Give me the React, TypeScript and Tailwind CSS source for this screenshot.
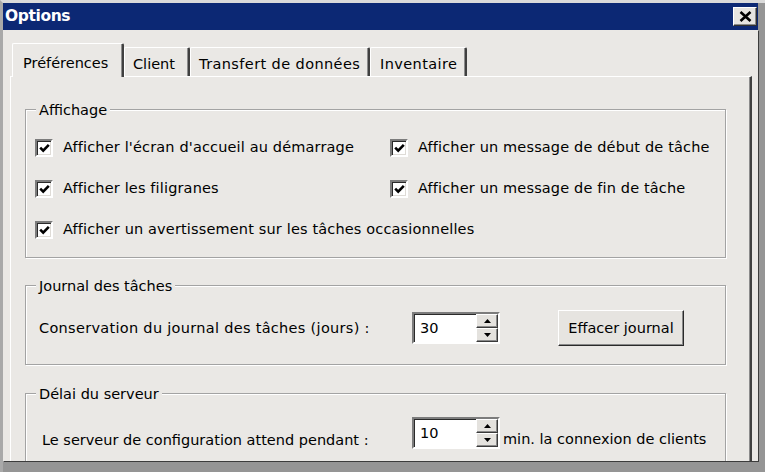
import React from "react";

function Check() {
  return (
    <span className="w-[18px] h-[18px] shrink-0 bg-white border-t-2 border-l-2 border-t-[#7c7c7c] border-l-[#7c7c7c] border-b-2 border-r-2 border-b-white border-r-white shadow-[inset_1px_1px_0_#2a2a2a,inset_-1px_-1px_0_#dedbd6] flex items-center justify-center">
      <svg width="11" height="10" viewBox="0 0 11 10">
        <path d="M1.2 4.6 L4.2 7.6 L9.8 1.8" stroke="#000" strokeWidth="2.6" fill="none" />
      </svg>
    </span>
  );
}

function CheckRow({ label, className = "" }: { label: string; className?: string }) {
  return (
    <div className={"h-[41px] flex items-center " + className}>
      <Check />
      <span className="ml-[10px] whitespace-nowrap tracking-[0.15px]">{label}</span>
    </div>
  );
}

function SpinBtn({ up }: { up?: boolean }) {
  return (
    <div className="flex-1 bg-[#e4e2de] border-t border-l border-t-white border-l-white border-b border-r border-b-[#3a3a3a] border-r-[#3a3a3a] shadow-[inset_-1px_-1px_0_#8a8a8a] flex items-center justify-center">
      <svg width="7" height="4" viewBox="0 0 7 4">
        {up ? <path d="M0 4 L3.5 0 L7 4Z" fill="#000" /> : <path d="M0 0 L3.5 4 L7 0Z" fill="#000" />}
      </svg>
    </div>
  );
}

function Spin({ value }: { value: string }) {
  return (
    <div className="w-[88px] h-[32px] shrink-0 flex bg-white border-t-2 border-l-2 border-t-[#7c7c7c] border-l-[#7c7c7c] border-b-2 border-r-2 border-b-white border-r-white shadow-[inset_1px_1px_0_#2a2a2a]">
      <div className="flex-1 pl-[6px] flex items-center">{value}</div>
      <div className="w-[22px] flex flex-col">
        <SpinBtn up />
        <SpinBtn />
      </div>
    </div>
  );
}

function Group({ title, className = "", children }: { title: string; className?: string; children: React.ReactNode }) {
  return (
    <div className={"relative w-[701px] border border-[#a3a3a3] shadow-[inset_1px_1px_0_#ffffff,1px_1px_0_#ffffff] " + className}>
      <span className="absolute left-[10px] -top-[8px] px-[3px] bg-[#eae8e5] leading-[17px] whitespace-nowrap">{title}</span>
      {children}
    </div>
  );
}

function Tab({ label, selected, w, pl, tr = "" }: { label: string; selected?: boolean; w: string; pl: string; tr?: string }) {
  return (
    <div
      className={
        "rounded-t-[2px] border-t border-l border-t-white border-l-white border-r-2 border-r-[#404040] shadow-[inset_-1px_0_0_#8c8c8c] bg-[#eae8e5] whitespace-nowrap " +
        w +
        " " +
        pl +
        " " +
        tr +
        " " +
        (selected ? "h-[34px] -mb-px pt-[11px] relative z-10" : "h-[29px] pt-[8px]")
      }
    >
      {label}
    </div>
  );
}

export default function App() {
  return (
    <div className="w-[765px] h-[472px] overflow-hidden bg-[#959595] border-t-[3px] border-t-[#dadada] border-l-[3px] border-l-[#a9a9a9] pr-[7px] pb-[11px] flex flex-col font-['DejaVu_Sans',sans-serif] text-[14.5px] leading-[17px] text-black">
      <div className="h-[27px] shrink-0 bg-[#0c2874] flex items-center justify-between pl-[2px] pr-[1px]">
        <span className="text-white font-bold text-[15.5px] tracking-[-0.4px]">Options</span>
        <div className="w-[24px] h-[19px] bg-[#e6e4e0] border-t border-l border-t-white border-l-white border-b border-r border-b-[#303030] border-r-[#303030] shadow-[inset_-1px_-1px_0_#8a8a8a] flex items-center justify-center">
          <svg width="13" height="11" viewBox="0 0 13 11">
            <path d="M1.5 1 L11.5 10 M11.5 1 L1.5 10" stroke="#000" strokeWidth="2.6" />
          </svg>
        </div>
      </div>
      <div className="flex-1 bg-[#eae8e5] pl-[7px] pr-[6px] pt-[13px] overflow-hidden shadow-[1px_1px_0_#3c3c3c]">
        <div className="flex items-end h-[33px] pl-[2px] relative z-10">
          <Tab label="Préférences" selected w="w-[112px]" pl="pl-[10px]" />
          <Tab label="Client" w="w-[66px]" pl="pl-[8px]" />
          <Tab label="Transfert de données" w="w-[180px]" pl="pl-[8px]" tr="tracking-[0.4px]" />
          <Tab label="Inventaire" w="w-[97px]" pl="pl-[9px]" tr="tracking-[0.4px]" />
        </div>
        <div className="h-[400px] border-t border-l border-t-white border-l-white border-r-2 border-r-[#404040] shadow-[inset_-1px_0_0_#8c8c8c] pl-[14px]">
          <Group title="Affichage" className="mt-[32px] pt-[17px] pb-[7px]">
            <div className="grid grid-cols-[355px_1fr] pl-[9px]">
              <CheckRow label="Afficher l'écran d'accueil au démarrage" />
              <CheckRow label="Afficher un message de début de tâche" />
              <CheckRow label="Afficher les filigranes" />
              <CheckRow label="Afficher un message de fin de tâche" />
              <CheckRow label="Afficher un avertissement sur les tâches occasionnelles" className="col-span-2" />
            </div>
          </Group>
          <Group title="Journal des tâches" className="mt-[27px] pt-[24px] pb-[18px]">
            <div className="flex items-center h-[36px] pl-[13px]">
              <span className="w-[373px] shrink-0 whitespace-nowrap tracking-[0.3px]">Conservation du journal des tâches (jours) :</span>
              <Spin value="30" />
              <div className="ml-[58px] w-[126px] h-[36px] bg-[#e6e4e0] border-t border-l border-t-white border-l-white border-b border-r border-b-[#2a2a2a] border-r-[#2a2a2a] shadow-[inset_-1px_-1px_0_#8a8a8a] flex items-center justify-center whitespace-nowrap">
                Effacer journal
              </div>
            </div>
          </Group>
          <Group title="Délai du serveur" className="mt-[28px] pt-[23px] pb-[30px]">
            <div className="flex items-start pl-[16px]">
              <span className="w-[370px] shrink-0 mt-[15px] whitespace-nowrap">Le serveur de configuration attend pendant :</span>
              <Spin value="10" />
              <span className="ml-[3px] mt-[14px] whitespace-nowrap">min. la connexion de clients</span>
            </div>
          </Group>
        </div>
      </div>
    </div>
  );
}
